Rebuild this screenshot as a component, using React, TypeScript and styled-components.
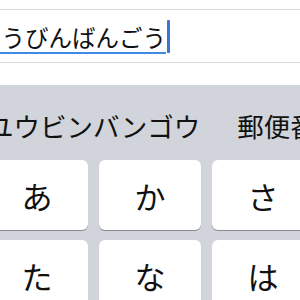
import React from "react";
import styled, { createGlobalStyle } from "styled-components";

const Global = createGlobalStyle`
  html, body { margin: 0; padding: 0; background: #ffffff; }
  body { font-family: "Noto Sans CJK JP", "Noto Sans", sans-serif; overflow: hidden; }
`;

const Screen = styled.div`
  width: 300px;
  height: 300px;
  overflow: hidden;
  display: flex;
  flex-direction: column;
  background: #ffffff;
`;

const TopGap = styled.div`
  height: 9px;
  border-bottom: 1px solid #d9d9dc;
  flex: none;
`;

const InputRow = styled.div`
  height: 52px;
  border-bottom: 1px solid #d9d9dc;
  display: flex;
  align-items: center;
  overflow: hidden;
  flex: none;
`;

const Marked = styled.span`
  font-size: 23.5px;
  line-height: 30px;
  color: #111;
  margin-left: -22px;
  border-bottom: 2px solid #3f8ae2;
  white-space: nowrap;
  margin-top: 4px;
`;

const Caret = styled.span`
  width: 3px;
  height: 33px;
  background: #3d73d6;
  border-radius: 1px;
  margin-left: 1px;
  flex: none;
`;

const Spacer = styled.div`
  height: 22px;
  flex: none;
`;

const Keyboard = styled.div`
  flex: 1;
  background: #d1d4da;
  display: flex;
  flex-direction: column;
`;

const CandidateBar = styled.div`
  height: 75px;
  display: flex;
  align-items: center;
  gap: 37px;
  margin-left: -13px;
  white-space: nowrap;
  font-size: 26.5px;
  color: #111;
  padding-top: 6px;
  box-sizing: border-box;
`;

const Candidate = styled.span`
  flex: none;
`;

const KeyGrid = styled.div`
  display: grid;
  grid-template-columns: repeat(3, 102px);
  column-gap: 11px;
  row-gap: 10px;
  margin-left: -14px;
`;

const Key = styled.div`
  height: 70px;
  background: #ffffff;
  border-radius: 6px;
  box-shadow: 0 1px 0 #8a8b8f;
  display: flex;
  align-items: center;
  justify-content: center;
  font-size: 31px;
  color: #111;
`;

const rows = ["あ", "か", "さ", "た", "な", "は"];

export default function App() {
  return (
    <>
      <Global />
      <Screen>
        <TopGap />
        <InputRow>
          <Marked>ゆうびんばんごう</Marked>
          <Caret />
        </InputRow>
        <Spacer />
        <Keyboard>
          <CandidateBar>
            <Candidate>ユウビンバンゴウ</Candidate>
            <Candidate>郵便番号</Candidate>
          </CandidateBar>
          <KeyGrid>
            {rows.map((k) => (
              <Key key={k}>{k}</Key>
            ))}
          </KeyGrid>
        </Keyboard>
      </Screen>
    </>
  );
}
